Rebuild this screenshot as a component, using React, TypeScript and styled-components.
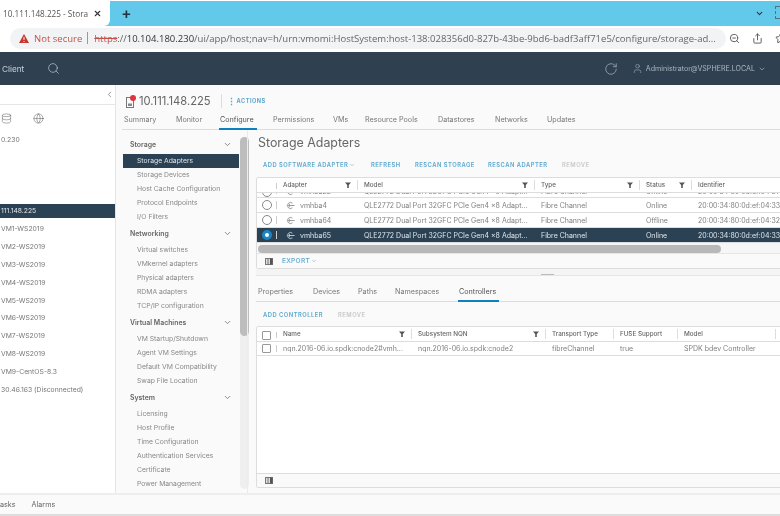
import * as React from "react";
import styled, { createGlobalStyle } from "styled-components";
import { ChevronDown, ChevronLeft, Database, Globe, RotateCw, Search, Share, Star, User, X, ZoomOut } from "lucide-react";

const GlobalStyle = createGlobalStyle`
  html, body { margin: 0; padding: 0; background: #fff; }
  * { box-sizing: border-box; }
`;

const Page = styled.div`
  width: 780px;
  height: 516px;
  overflow: hidden;
  display: flex;
  flex-direction: column;
  font-family: Inter, "Liberation Sans", sans-serif;
  color: #666;
  background: #fff;
  filter: blur(0.45px);
`;

/* browser chrome */
const TabStrip = styled.div`
  height: 25px;
  margin-top: 1px;
  flex: none;
  display: flex;
  align-items: center;
  background: #62c9ea;
  color: #333;
`;
const BrowserTab = styled.div`
  width: 110px;
  height: 26px;
  margin-top: -1px;
  padding: 0 8px 0 3px;
  display: flex;
  align-items: center;
  justify-content: space-between;
  background: #fff;
  border-bottom-right-radius: 6px;
  font: 8.2px "Open Sans", sans-serif;
  color: #555;
  white-space: nowrap;
`;
const TabPlus = styled.div`
  margin-left: 12px;
  font: 700 15px/1 "Liberation Sans", sans-serif;
  color: #24343f;
`;
const StripEnd = styled.div`
  margin-left: auto;
  display: flex;
  align-items: center;
  gap: 11px;
  color: #334;
`;
const WindowEdge = styled.span`
  width: 5px;
  height: 13px;
  margin-bottom: 3px;
  border: 1px dashed #55707f;
  border-right: 0;
`;
const AddressBar = styled.div`
  height: 26px;
  flex: none;
  display: flex;
  align-items: center;
  padding-left: 10px;
  border-bottom: 2px solid #fff;
`;
const UrlPill = styled.div`
  width: 716px;
  height: 21px;
  flex: none;
  padding-left: 9px;
  display: flex;
  align-items: center;
  border-radius: 11px;
  background: #f1f3f4;
  font: 9.53px "Open Sans", sans-serif;
  white-space: nowrap;
  overflow: hidden;
`;
const NotSecure = styled.span`
  margin-left: 5px;
  color: #c5524a;
`;
const UrlBar = styled.span`
  width: 1px;
  height: 12px;
  margin: 0 6px 0 5px;
  background: #999;
`;
const Https = styled.span`
  color: #c5524a;
  text-decoration: line-through;
`;
const Host = styled.span`
  color: #333;
`;
const UrlRest = styled.span`
  color: #666;
`;
const AddressIcons = styled.div`
  margin-left: 3px;
  display: flex;
  gap: 12px;
  color: #555;
  flex: none;
`;

/* app header */
const AppHeader = styled.header`
  height: 33px;
  flex: none;
  display: flex;
  align-items: center;
  background: #2f4050;
  color: #c9d2d9;
  font-size: 8.2px;
`;
const Brand = styled.span`
  margin-left: 2px;
  margin-right: 23px;
`;
const HeaderRight = styled.div`
  margin-left: auto;
  padding-right: 14px;
  display: flex;
  align-items: center;
  color: #aab6bf;
`;
const UserBox = styled.div`
  display: flex;
  align-items: center;
  margin-left: 14px;
  font-size: 7.1px;
  gap: 3px;
`;

const Body = styled.div`
  flex: 1;
  min-height: 0;
  display: flex;
`;

/* inventory tree */
const Sidebar = styled.aside`
  width: 116px;
  flex: none;
  background: #fff;
  border-right: 1px solid #e4e4e4;
  display: flex;
  flex-direction: column;
  overflow: hidden;
`;
const Collapse = styled.div`
  height: 20px;
  padding: 5px 1px 0 0;
  display: flex;
  justify-content: flex-end;
  align-items: flex-start;
  border-bottom: 1px solid #e6e6e6;
  color: #777;
`;
const TreeIcons = styled.div`
  height: 27px;
  padding-left: 1px;
  display: flex;
  gap: 21px;
  align-items: center;
  color: #666;
`;
const TreeRow = styled.div<{ $active?: boolean; $gap?: number }>`
  height: 14px;
  margin-top: ${(p) => p.$gap ?? 3.9}px;
  padding-left: 1px;
  display: flex;
  align-items: center;
  font-size: 6.8px;
  white-space: nowrap;
  color: ${(p) => (p.$active ? "#dfe5ea" : "#777")};
  background: ${(p) => (p.$active ? "#2b4254" : "transparent")};
`;

/* main */
const Main = styled.main`
  flex: 1;
  min-width: 0;
  display: flex;
  flex-direction: column;
  background: #fafafa;
`;
const ObjectHeader = styled.div`
  height: 25px;
  padding: 7px 0 0 10px;
  display: flex;
  align-items: center;
  flex: none;
`;
const ObjectName = styled.h1`
  margin: 0 0 0 3px;
  font-size: 11.2px;
  font-weight: 400;
  color: #666;
`;
const HeaderDivider = styled.span`
  width: 1px;
  height: 14px;
  margin: 0 5px 0 10px;
  background: #ddd;
`;
const Dots = styled.span`
  margin-right: 1px;
  color: #49afd9;
  font-size: 9px;
  font-weight: 700;
  line-height: 1;
`;
const Action = styled.span`
  color: #5aa7cf;
  font-size: 5.6px;
  font-weight: 700;
  letter-spacing: 0.5px;
`;
const TabRow = styled.nav<{ $pad: number; $inset: number }>`
  display: flex;
  flex: none;
  margin-left: ${(p) => p.$pad}px;
  padding-left: ${(p) => p.$inset}px;
  border-bottom: 1px solid #ddd;
`;
const TabItem = styled.span<{ $on?: boolean; $w: number }>`
  width: ${(p) => p.$w}px;
  height: 19px;
  flex: none;
  position: relative;
  font-size: 7.2px;
  line-height: 20px;
  white-space: nowrap;
  color: ${(p) => (p.$on ? "#555" : "#777")};
  &::after {
    content: "";
    display: ${(p) => (p.$on ? "block" : "none")};
    position: absolute;
    left: -1px;
    bottom: -1px;
    width: calc(100% - 15px);
    height: 2px;
    background: #0e7fbf;
  }
`;
const Split = styled.div`
  flex: 1;
  min-height: 0;
  display: flex;
`;

/* configure nav */
const ConfigNav = styled.div`
  width: 124px;
  flex: none;
  padding: 4.5px 0 0 0;
  margin-left: 7px;
  display: flex;
`;
const NavList = styled.div`
  width: 116px;
  flex: none;
`;
const NavHeading = styled.div`
  height: 14px;
  margin: 2.5px 0 2.5px 7px;
  padding-right: 7px;
  display: flex;
  align-items: center;
  justify-content: space-between;
  font-size: 6.9px;
  font-weight: 600;
  color: #666;
`;
const NavItem = styled.div<{ $on?: boolean }>`
  height: 14px;
  padding-left: 14px;
  display: flex;
  align-items: center;
  font-size: 6.8px;
  white-space: nowrap;
  color: ${(p) => (p.$on ? "#dfe5ea" : "#888")};
  background: ${(p) => (p.$on ? "#2b4254" : "transparent")};
`;
const ScrollTrack = styled.div`
  width: 9px;
  height: 352px;
  flex: none;
  margin: 2.5px 0 0 1px;
  border-radius: 5px;
  background: #efefef;
`;
const ScrollThumb = styled.div`
  height: 199px;
  border-radius: 5px;
  background: #bdbdbd;
`;

/* content column */
const Content = styled.div`
  flex: 1;
  min-width: 0;
  padding-left: 8px;
  display: flex;
  flex-direction: column;
  border-left: 1px solid #ececec;
  overflow: hidden;
`;
const PageTitle = styled.h2`
  margin: 4px 0 0 2px;
  height: 20px;
  flex: none;
  font-size: 12.4px;
  line-height: 18px;
  font-weight: 400;
  color: #666;
  white-space: nowrap;
`;
const Toolbar = styled.div<{ $h: number; $below?: number }>`
  height: ${(p) => p.$h}px;
  padding-left: 7px;
  padding-bottom: ${(p) => p.$below ?? 0}px;
  display: flex;
  align-items: center;
  flex: none;
  white-space: nowrap;
`;
const ToolButton = styled.span<{ $w: number; $off?: boolean }>`
  width: ${(p) => p.$w}px;
  flex: none;
  font-size: 5.8px;
  font-weight: 600;
  letter-spacing: 0.5px;
  color: ${(p) => (p.$off ? "#c8c8c8" : "#5aa7cf")};
  display: flex;
  align-items: center;
  gap: 1px;
`;
const ExportButton = styled(ToolButton)`
  font-size: 6.6px;
  font-weight: 500;
  letter-spacing: 0.25px;
`;
const Table = styled.div`
  width: 560px;
  flex: none;
  border: 1px solid #ddd;
  border-radius: 2px;
  background: #fff;
  overflow: hidden;
`;
const HeadRow = styled.div<{ $cols: string }>`
  display: grid;
  grid-template-columns: ${(p) => p.$cols};
  height: 15px;
  padding-top: 2px;
  background: #fff;
  border-bottom: 1px solid #ddd;
  font-size: 6.3px;
  font-weight: 500;
  color: #666;
`;
const HeadCell = styled.div<{ $first?: boolean }>`
  margin: 0 0 2px;
  padding: 0 6px;
  display: flex;
  align-items: center;
  justify-content: space-between;
  white-space: nowrap;
  border-left: ${(p) => (p.$first ? "0" : "1px solid #ddd")};
`;
const DataRow = styled.div<{ $cols: string; $on?: boolean; $h?: number; $clip?: boolean }>`
  display: grid;
  grid-template-columns: ${(p) => p.$cols};
  height: ${(p) => p.$h ?? 15}px;
  overflow: hidden;
  font-size: 7px;
  color: ${(p) => (p.$on ? "#dfe5ea" : "#808080")};
  background: ${(p) => (p.$on ? "#2b4254" : "#fff")};
  border-bottom: 1px solid #ddd;
  ${(p) => (p.$clip ? "grid-auto-rows: 11px; align-content: end;" : "")}
`;
const Cell = styled.div<{ $lead?: boolean }>`
  padding: 0 6px 0 ${(p) => (p.$lead ? 6 : 7)}px;
  display: flex;
  align-items: center;
  gap: 5px;
  white-space: nowrap;
  overflow: hidden;
`;
const MarkCell = styled.div`
  padding-right: 1px;
  display: flex;
  align-items: center;
  justify-content: center;
  position: relative;
  &::after {
    content: "";
    position: absolute;
    right: 0;
    top: 3px;
    bottom: 3px;
    width: 1px;
    background: #ccc;
  }
`;
const Radio = styled.span<{ $on?: boolean }>`
  width: 10px;
  height: 10px;
  flex: none;
  border-radius: 50%;
  border: ${(p) => (p.$on ? "3.5px solid #1a86c8" : "1px solid #888")};
  background: ${(p) => (p.$on ? "#fff" : "transparent")};
`;
const Check = styled.span`
  width: 9px;
  height: 9px;
  flex: none;
  border: 1px solid #999;
  border-radius: 1px;
  background: #fff;
`;
const Hscroll = styled.div`
  height: 11px;
  padding: 2px 0 0 1px;
  background: #f6f6f6;
  border-bottom: 1px solid #e6e6e6;
`;
const HThumb = styled.div`
  width: 463px;
  height: 8px;
  border-radius: 4px;
  background: #b8b8b8;
`;
const TableFoot = styled.div<{ $h: number }>`
  height: ${(p) => p.$h}px;
  display: flex;
  align-items: center;
  gap: 9px;
  padding-left: 8px;
  background: #fafafa;
`;
const Blank = styled.div`
  height: 118px;
  background: #fff;
  border-bottom: 1px solid #ddd;
`;
const Splitter = styled.div`
  width: 560px;
  height: 7px;
  flex: none;
  margin-bottom: 6px;
  background: #f4f4f4;
  border-bottom: 1px solid #e6e6e6;
  display: flex;
  align-items: flex-end;
`;
const Grip = styled.span`
  width: 13px;
  height: 1px;
  margin-left: 285px;
  background: #bbb;
`;
const AppFooter = styled.footer`
  height: 23px;
  flex: none;
  display: flex;
  align-items: center;
  gap: 16px;
  background: #fafafa;
  border-top: 2px solid #eee;
  border-bottom: 2px solid #ddd;
  font-size: 7.2px;
  color: #666;
`;

const FlowIcon = styled.svg`
  flex: none;
`;
const RowIcon = styled.svg`
  flex: none;
  margin-left: 3px;
`;

const Funnel = () => (
  <FlowIcon width="6" height="6" viewBox="0 0 6 6">
    <path d="M0 0.5h6L3.8 3v3H2.2V3z" fill="#555" />
  </FlowIcon>
);

const AdapterIcon = () => (
  <RowIcon width="9" height="9" viewBox="0 0 9 9" fill="none" stroke="currentColor" strokeWidth="0.8">
    <path d="M6.4 2.2A3 3 0 1 0 6.4 6.8" />
    <path d="M2.6 4.5h6M4 3.3L2.6 4.5 4 5.7" />
  </RowIcon>
);

const ColumnsIcon = () => (
  <FlowIcon width="8" height="7" viewBox="0 0 8 7">
    <rect x="0.5" y="0.5" width="7" height="6" fill="#ddd" stroke="#777" />
    <rect x="5" y="0.5" width="2.5" height="6" fill="#555" />
    <path d="M3 0.5v6" stroke="#777" />
  </FlowIcon>
);

const HostIcon = () => (
  <FlowIcon width="10" height="13" viewBox="0 0 10 13">
    <rect x="0.5" y="2.5" width="7" height="10" fill="none" stroke="#777" />
    <rect x="2" y="8.5" width="4" height="2.5" fill="#888" />
    <circle cx="7" cy="3" r="3" fill="#d9363e" />
  </FlowIcon>
);

const WarnIcon = () => (
  <FlowIcon width="10" height="9" viewBox="0 0 10 9">
    <path d="M5 0L10 9H0z" fill="#c5392f" />
    <path d="M5 3v3M5 7v1" stroke="#fff" strokeWidth="0.9" />
  </FlowIcon>
);

const tabs: [string, number, boolean?][] = [
  ["Summary", 52],
  ["Monitor", 44],
  ["Configure", 53, true],
  ["Permissions", 60],
  ["VMs", 32],
  ["Resource Pools", 73],
  ["Datastores", 57],
  ["Networks", 52],
  ["Updates", 40],
];

const lowerTabs: [string, number, boolean?][] = [
  ["Properties", 55],
  ["Devices", 45],
  ["Paths", 37],
  ["Namespaces", 64],
  ["Controllers", 56, true],
];

const nav: [string, string[]][] = [
  ["Storage", ["Storage Adapters", "Storage Devices", "Host Cache Configuration", "Protocol Endpoints", "I/O Filters"]],
  ["Networking", ["Virtual switches", "VMkernel adapters", "Physical adapters", "RDMA adapters", "TCP/IP configuration"]],
  ["Virtual Machines", ["VM Startup/Shutdown", "Agent VM Settings", "Default VM Compatibility", "Swap File Location"]],
  ["System", ["Licensing", "Host Profile", "Time Configuration", "Authentication Services", "Certificate", "Power Management"]],
];

const vms = ["VM1-WS2019", "VM2-WS2019", "VM3-WS2019", "VM4-WS2019", "VM5-WS2019", "VM6-WS2019", "VM7-WS2019", "VM8-WS2019", "VM9-CentOS-8.3", "30.46.163 (Disconnected)"];

const model = "QLE2772 Dual Port 32GFC PCIe Gen4 x8 Adapt...";
const adapters = [
  { name: "vmhba22", status: "Online", id: "20:00:34:80:0d:ef:04:31", h: 5, clip: true },
  { name: "vmhba4", status: "Online", id: "20:00:34:80:0d:ef:04:33" },
  { name: "vmhba64", status: "Offline", id: "20:00:34:80:0d:ef:04:32" },
  { name: "vmhba65", status: "Online", id: "20:00:34:80:0d:ef:04:33", on: true },
];

const topCols = "20px 80px 177px 105px 52px 130px";
const lowCols = "20px 134px 134px 68px 64px 98px 40px";

export default function App() {
  return (
    <Page>
      <GlobalStyle />
      <TabStrip>
        <BrowserTab>
          <span>10.111.148.225 - Stora</span>
          <X size={9} strokeWidth={3} color="#333" />
        </BrowserTab>
        <TabPlus>+</TabPlus>
        <StripEnd>
          <ChevronDown size={9} strokeWidth={3} />
          <WindowEdge />
        </StripEnd>
      </TabStrip>
      <AddressBar>
        <UrlPill>
          <WarnIcon />
          <NotSecure>Not secure</NotSecure>
          <UrlBar />
          <Https>https</Https>
          <UrlRest>://</UrlRest>
          <Host>10.104.180.230</Host>
          <UrlRest>/ui/app/host;nav=h/urn:vmomi:HostSystem:host-138:028356d0-827b-43be-9bd6-badf3aff71e5/configure/storage-ad...</UrlRest>
        </UrlPill>
        <AddressIcons>
          <ZoomOut size={11} />
          <Share size={11} />
          <Star size={11} />
        </AddressIcons>
      </AddressBar>
      <AppHeader>
        <Brand>Client</Brand>
        <Search size={13} strokeWidth={1.2} />
        <HeaderRight>
          <RotateCw size={14} strokeWidth={1.2} />
          <UserBox>
            <User size={11} strokeWidth={1.2} />
            Administrator@VSPHERE.LOCAL
            <ChevronDown size={8} />
          </UserBox>
        </HeaderRight>
      </AppHeader>
      <Body>
        <Sidebar>
          <Collapse><ChevronLeft size={9} /></Collapse>
          <TreeIcons>
            <Database size={11} strokeWidth={1.2} />
            <Globe size={11} strokeWidth={1.2} />
          </TreeIcons>
          <div>
            <TreeRow $gap={0}>0.230</TreeRow>
            <TreeRow $gap={57.6} $active>111.148.225</TreeRow>
            {vms.map((v) => (
              <TreeRow key={v}>{v}</TreeRow>
            ))}
          </div>
        </Sidebar>
        <Main>
          <ObjectHeader>
            <HostIcon />
            <ObjectName>10.111.148.225</ObjectName>
            <HeaderDivider />
            <Dots>⋮</Dots>
            <Action>ACTIONS</Action>
          </ObjectHeader>
          <TabRow $pad={6} $inset={2}>
            {tabs.map(([t, w, on]) => (
              <TabItem key={t} $w={w} $on={on}>{t}</TabItem>
            ))}
          </TabRow>
          <Split>
            <ConfigNav>
              <NavList>
                {nav.map(([title, items]) => (
                  <div key={title}>
                    <NavHeading>
                      {title}
                      <ChevronDown size={9} />
                    </NavHeading>
                    {items.map((i) => (
                      <NavItem key={i} $on={i === "Storage Adapters"}>{i}</NavItem>
                    ))}
                  </div>
                ))}
              </NavList>
              <ScrollTrack><ScrollThumb /></ScrollTrack>
            </ConfigNav>
            <Content>
              <PageTitle>Storage Adapters</PageTitle>
              <Toolbar $h={23} $below={2}>
                <ToolButton $w={108}>ADD SOFTWARE ADAPTER <ChevronDown size={6} /></ToolButton>
                <ToolButton $w={44}>REFRESH</ToolButton>
                <ToolButton $w={73}>RESCAN STORAGE</ToolButton>
                <ToolButton $w={74}>RESCAN ADAPTER</ToolButton>
                <ToolButton $w={40} $off>REMOVE</ToolButton>
              </Toolbar>
              <Table>
                <HeadRow $cols={topCols}>
                  <MarkCell />
                  <HeadCell $first>Adapter <Funnel /></HeadCell>
                  <HeadCell>Model <Funnel /></HeadCell>
                  <HeadCell>Type <Funnel /></HeadCell>
                  <HeadCell>Status <Funnel /></HeadCell>
                  <HeadCell>Identifier</HeadCell>
                </HeadRow>
                {adapters.map((a) => (
                  <DataRow key={a.name} $cols={topCols} $on={a.on} $h={a.h} $clip={a.clip}>
                    <MarkCell><Radio $on={a.on} /></MarkCell>
                    <Cell $lead><AdapterIcon />{a.name}</Cell>
                    <Cell>{model}</Cell>
                    <Cell>Fibre Channel</Cell>
                    <Cell>{a.status}</Cell>
                    <Cell>{a.id}</Cell>
                  </DataRow>
                ))}
                <Hscroll><HThumb /></Hscroll>
                <TableFoot $h={14}>
                  <ColumnsIcon />
                  <ExportButton $w={40}>EXPORT <ChevronDown size={6} /></ExportButton>
                </TableFoot>
              </Table>
              <Splitter><Grip /></Splitter>
              <TabRow $pad={0} $inset={2}>
                {lowerTabs.map(([t, w, on]) => (
                  <TabItem key={t} $w={w} $on={on}>{t}</TabItem>
                ))}
              </TabRow>
              <Toolbar $h={24}>
                <ToolButton $w={75}>ADD CONTROLLER</ToolButton>
                <ToolButton $w={40} $off>REMOVE</ToolButton>
              </Toolbar>
              <Table>
                <HeadRow $cols={lowCols}>
                  <MarkCell><Check /></MarkCell>
                  <HeadCell $first>Name <Funnel /></HeadCell>
                  <HeadCell>Subsystem NQN <Funnel /></HeadCell>
                  <HeadCell>Transport Type</HeadCell>
                  <HeadCell>FUSE Support</HeadCell>
                  <HeadCell>Model</HeadCell>
                  <HeadCell />
                </HeadRow>
                <DataRow $cols={lowCols} $h={14}>
                  <MarkCell><Check /></MarkCell>
                  <Cell $lead>nqn.2016-06.io.spdk:cnode2#vmh...</Cell>
                  <Cell>nqn.2016-06.io.spdk:cnode2</Cell>
                  <Cell>fibreChannel</Cell>
                  <Cell>true</Cell>
                  <Cell>SPDK bdev Controller</Cell>
                </DataRow>
                <Blank />
                <TableFoot $h={13}><ColumnsIcon /></TableFoot>
              </Table>
            </Content>
          </Split>
        </Main>
      </Body>
      <AppFooter>
        <span>asks</span>
        <span>Alarms</span>
      </AppFooter>
    </Page>
  );
}
